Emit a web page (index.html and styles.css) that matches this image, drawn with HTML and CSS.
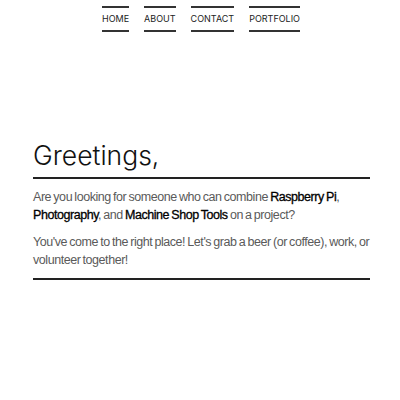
FILE: index.html
```html
<!DOCTYPE html>
<html>
<head>
<meta charset="utf-8">
<link rel="stylesheet" href="styles.css">
</head>
<body>
<nav class="nav">
  <a class="nav-link nav-home" href="#">HOME</a>
  <a class="nav-link nav-about" href="#">ABOUT</a>
  <a class="nav-link nav-contact" href="#">CONTACT</a>
  <a class="nav-link nav-portfolio" href="#">PORTFOLIO</a>
</nav>
<main class="main">
  <h1 class="title">Greetings,</h1>
  <div class="content">
    <p class="text">Are you looking for someone who can combine <strong>Raspberry Pi</strong>, <strong>Photography</strong>, and <strong>Machine Shop Tools</strong> on a project?</p>
    <p class="text">You've come to the right place! Let's grab a beer (or coffee), work, or volunteer together!</p>
  </div>
</main>
</body>
</html>
```
FILE: styles.css
```css
html, body {
  margin: 0;
  padding: 0;
  background: #fff;
}
body {
  width: 400px;
  height: 400px;
  overflow: hidden;
}
.nav {
  display: flex;
  justify-content: center;
  gap: 15px;
  padding-top: 6px;
  padding-left: 2px;
}
.nav-link {
  font-family: "Inter", sans-serif;
  font-size: 9px;
  font-weight: 400;
  color: #222;
  text-decoration: none;
  border-top: 2px solid #333;
  border-bottom: 2px solid #333;
  padding: 6px 0 6px;
  line-height: 10px;
}
.main {
  margin: 107px 30px 0 33px;
}
.title {
  font-family: "Inter", sans-serif;
  font-weight: 300;
  font-size: 26.5px;
  line-height: 32px;
  color: #111;
  margin: 0;
  padding-bottom: 6px;
  border-bottom: 2px solid #222;
}
.content {
  padding-top: 9px;
  padding-bottom: 9px;
  border-bottom: 2px solid #222;
}
.text {
  font-family: "Liberation Sans", Arial, sans-serif;
  font-weight: 400;
  font-size: 12.5px;
  line-height: 18px;
  letter-spacing: -0.45px;
  word-spacing: -0.8px;
  color: #5a5a5a;
  margin: 0 -4px 9px 0;
}
.text:last-child {
  margin-bottom: 0;
}
.text strong {
  font-weight: 400;
  color: #000;
  -webkit-text-stroke: 0.3px #000;
}
```
